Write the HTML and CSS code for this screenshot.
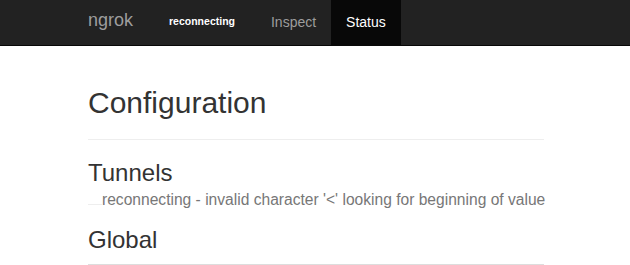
FILE: index.html
```html
<!DOCTYPE html>
<html lang="en">
  <head>
    <meta charset="UTF-8" />
    <meta name="viewport" content="width=device-width, initial-scale=1.0" />

    <link rel="stylesheet" href="styles.css">

    <title>ngrok - Status</title>
  </head>
  <body>
    <nav class="navbar">
      <div class="navbar-inner">
        <a class="brand" href="#">ngrok</a>
        <span class="conn-status">reconnecting</span>
        <ul class="nav">
          <li><a href="#">Inspect</a></li>
          <li class="active"><a href="#">Status</a></li>
        </ul>
      </div>
    </nav>

    <main class="container">
      <div class="page-header">
        <h1>Configuration</h1>
      </div>

      <h3 class="section-title">Tunnels</h3>
      <p class="tunnel-error"><span class="blank"></span>reconnecting - invalid character '&lt;' looking for beginning of value</p>

      <div class="page-header small">
        <h3>Global</h3>
      </div>
    </main>
  </body>
</html>
```

FILE: styles.css
```css
* {
  margin: 0;
  padding: 0;
  box-sizing: border-box;
}

body {
  font-family: "Liberation Sans", Arial, sans-serif;
  font-size: 14px;
  color: #333;
  background-color: #fff;
}

a {
  text-decoration: none;
}

.navbar {
  height: 46px;
  background-color: #222;
  border-bottom: 1px solid #080808;
}
.navbar-inner {
  display: flex;
  align-items: flex-start;
  height: 45px;
  margin-left: 88px;
}
.brand {
  padding-top: 10px;
  font-size: 18px;
  line-height: 20px;
  color: #9d9d9d;
}
.conn-status {
  margin: 0 21px 0 36px;
  padding-top: 11px;
  font-size: 10.5px;
  font-weight: bold;
  line-height: 20px;
  color: #fff;
}
.nav {
  display: flex;
  list-style: none;
}
.nav a {
  display: block;
  height: 45px;
  padding: 12px 15px 0;
  font-size: 14px;
  line-height: 20px;
  color: #9d9d9d;
}
.nav .active a {
  background-color: #080808;
  color: #fff;
}

.container {
  width: 456px;
  margin-left: 88px;
}

h1,
h3 {
  font-weight: 500;
  line-height: 1.1;
  color: #333;
}
h1 {
  font-size: 30px;
}
h3 {
  font-size: 24px;
}

.page-header {
  margin-top: 40px;
  padding-bottom: 9px;
  border-bottom: 1px solid #eee;
}
.page-header h1 {
  margin-bottom: 11px;
}
.page-header.small {
  margin-top: 16px;
  padding-bottom: 10px;
  border-bottom-color: #ddd;
}

.section-title {
  margin-top: 20px;
}

.tunnel-error {
  display: flex;
  align-items: baseline;
  margin-top: 3px;
  font-size: 15.6px;
  line-height: 22px;
  white-space: nowrap;
  color: #777;
}
.blank {
  flex-shrink: 0;
  width: 14px;
  height: 1px;
  border-bottom: 1px solid #eee;
}
```
